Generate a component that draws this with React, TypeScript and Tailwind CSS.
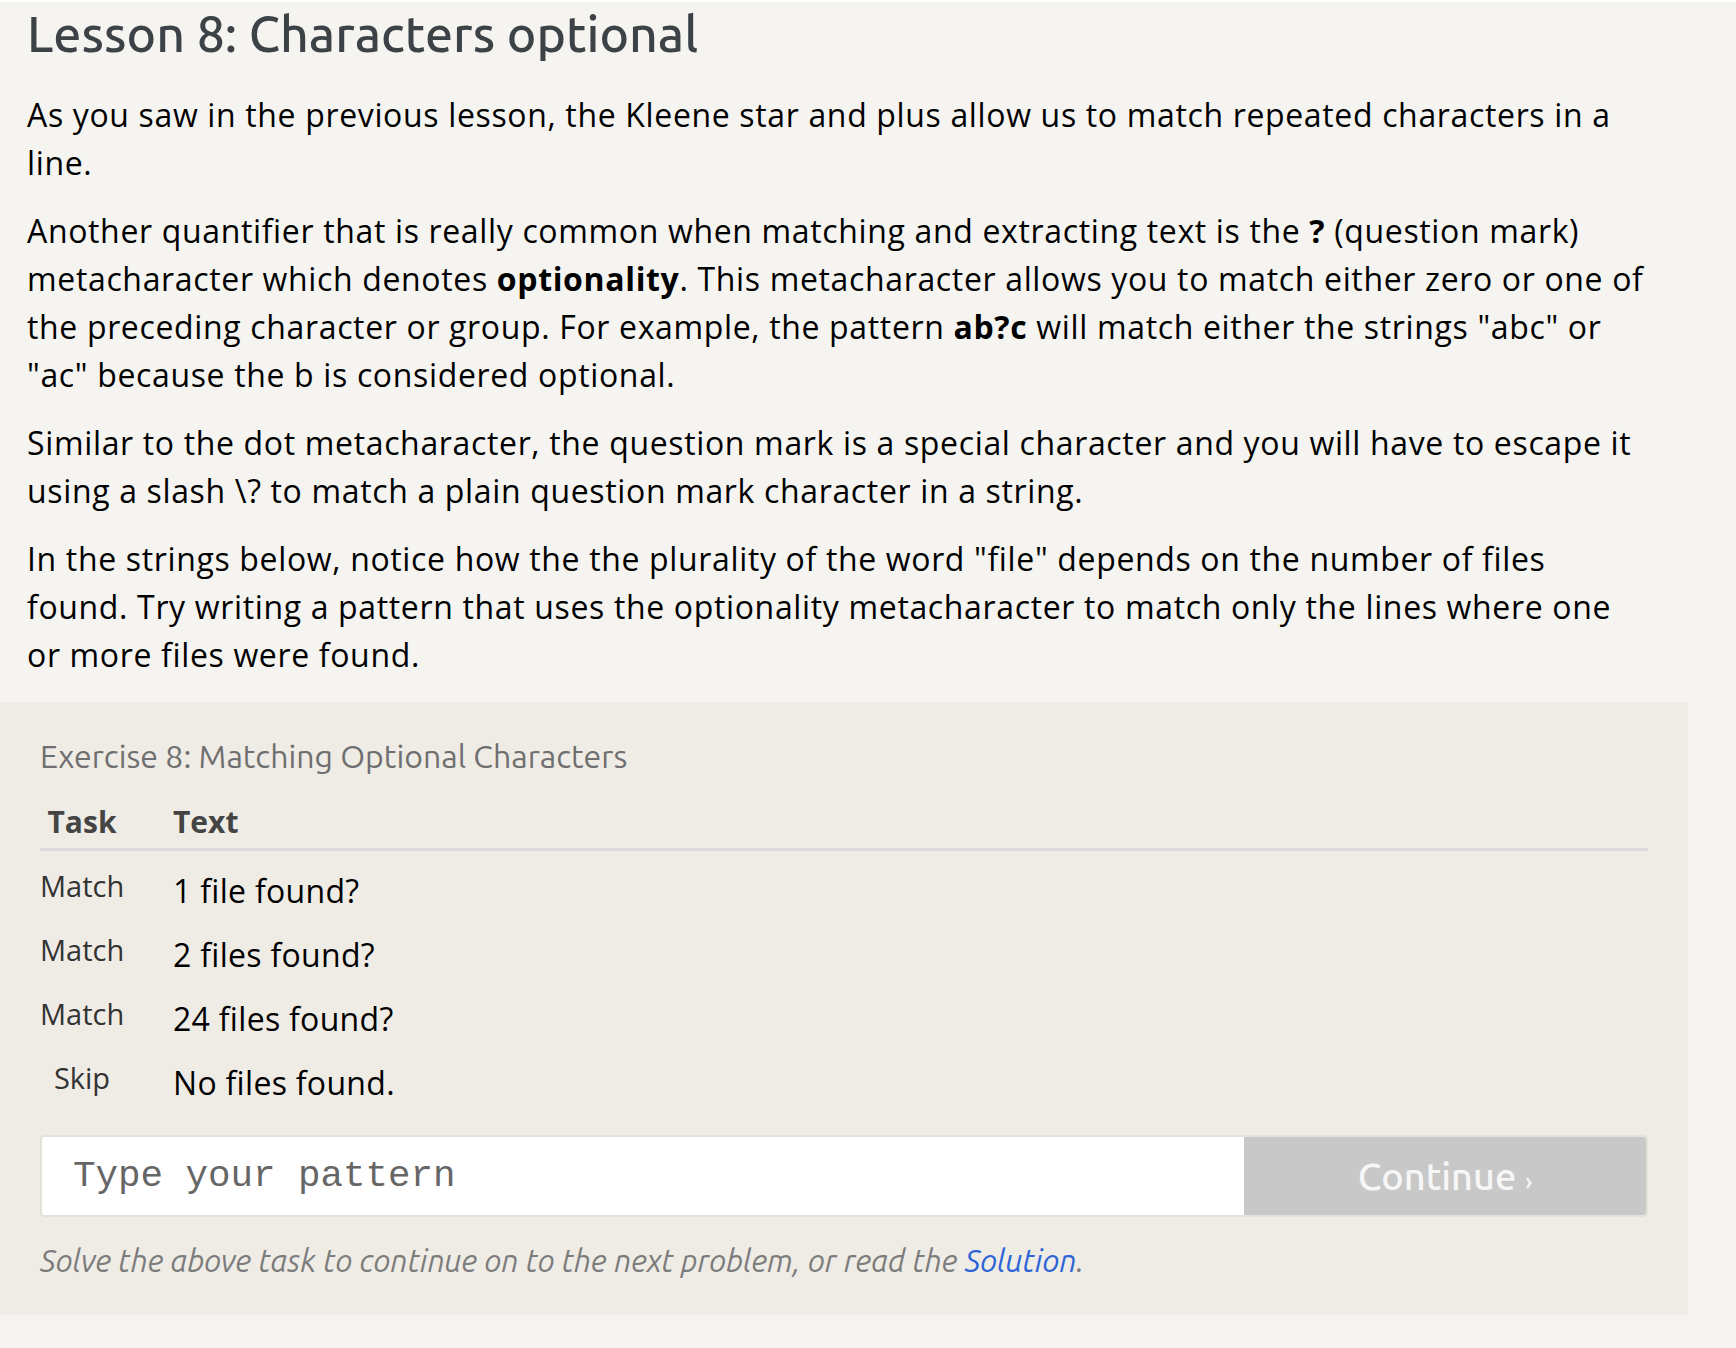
import { useState } from 'react';

const body = 'font-["Trebuchet_MS","Open_Sans",sans-serif]';
const ubuntu = 'font-["Ubuntu",Lato,"Noto_Sans",sans-serif]';

const rows = [
  { task: 'Match', text: '1 file found?' },
  { task: 'Match', text: '2 files found?' },
  { task: 'Match', text: '24 files found?' },
  { task: 'Skip', text: 'No files found.' },
];

export default function App() {
  const [pattern, setPattern] = useState('');

  return (
    <div className={`min-h-[1348px] w-full bg-[#f5f4f1] text-black ${body}`}>
      <div className="w-[1688px]">
        {/* Lesson text */}
        <div className="px-[27px]">
          <h1 className={`mt-[2px] mb-[27px] text-[50px] leading-[62px] font-medium text-[#3d4247] ${ubuntu}`}>
            Lesson 8: Characters optional
          </h1>
          <div className="text-[32px] leading-[48px] tracking-[0.65px] whitespace-nowrap">
            <p className="mb-5">
              As you saw in the previous lesson, the Kleene star and plus allow us to match repeated characters in a
              <br />
              line.
            </p>
            <p className="mb-5">
              Another quantifier that is really common when matching and extracting text is the <b>?</b> (question mark)
              <br />
              metacharacter which denotes <b>optionality</b>. This metacharacter allows you to match either zero or one of
              <br />
              the preceding character or group. For example, the pattern <b>ab?c</b> will match either the strings "abc" or
              <br />
              "ac" because the b is considered optional.
            </p>
            <p className="mb-5">
              Similar to the dot metacharacter, the question mark is a special character and you will have to escape it
              <br />
              using a slash \? to match a plain question mark character in a string.
            </p>
            <p>
              In the strings below, notice how the the plurality of the word "file" depends on the number of files
              <br />
              found. Try writing a pattern that uses the optionality metacharacter to match only the lines where one
              <br />
              or more files were found.
            </p>
          </div>
        </div>

        {/* Exercise panel */}
        <div className="mt-[23px] rounded-[4px] bg-[#efece6] px-[40px] pt-[34px] pb-[34px]">
          <div className={`text-[32px] leading-[40px] text-[#6f6f6f] ${ubuntu}`}>
            Exercise 8: Matching Optional Characters
          </div>

          <div className="mt-[26px] grid grid-cols-[84px_1fr] gap-x-[49px] border-b-[3px] border-[#dcdcdc] pb-[6px] text-[30px] leading-[40px] font-bold text-[#444]">
            <div className="text-center">Task</div>
            <div>Text</div>
          </div>

          {rows.map((r, i) => (
            <div key={i} className="grid h-16 grid-cols-[84px_1fr] items-start gap-x-[49px]">
              <div className="pt-[11px] text-center text-[29px] leading-[48px] text-[#333]">{r.task}</div>
              <div className="pt-[16px] text-[32px] leading-[48px] tracking-[0.3px] text-black">{r.text}</div>
            </div>
          ))}

          <div className="mt-[28px] flex h-[82px] overflow-hidden rounded-[5px] border-2 border-[#e4e1da]">
            <input
              value={pattern}
              onChange={(e) => setPattern(e.target.value)}
              placeholder="Type your pattern"
              className='min-w-0 flex-1 bg-white px-[31px] font-["Courier_New","Liberation_Mono",monospace] text-[37.5px] text-[#333] outline-none placeholder:text-[#666]'
            />
            <button className={`w-[402px] bg-[#c8c8c8] text-[38px] font-medium text-[#f7f7f7] ${ubuntu}`}>
              Continue <span className="text-[24px]">›</span>
            </button>
          </div>

          <div className={`mt-[24px] text-[31px] leading-[40px] italic text-[#7c7c7c] ${ubuntu}`}>
            Solve the above task to continue on to the next problem, or read the{' '}
            <a href="#" className="text-[#2d64d6]">
              Solution
            </a>
            .
          </div>
        </div>
      </div>
    </div>
  );
}
